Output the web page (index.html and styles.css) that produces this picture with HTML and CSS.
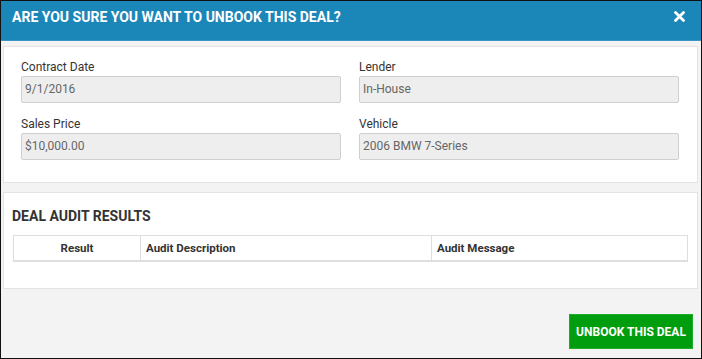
FILE: index.html
```html
<!DOCTYPE html>
<html>
<head>
<meta charset="utf-8">
<link rel="stylesheet" href="styles.css">
</head>
<body>
<div class="window">
  <div class="header">
    <div class="title">ARE YOU SURE YOU WANT TO UNBOOK THIS DEAL?</div>
    <svg class="close" width="11" height="11" viewBox="0 0 11 11"><path d="M1.5 1.5 L9.5 9.5 M9.5 1.5 L1.5 9.5" stroke="#fff" stroke-width="2.8" stroke-linecap="round"/></svg>
  </div>
  <div class="panel details">
    <div class="field">
      <div class="label">Contract Date</div>
      <div class="input">9/1/2016</div>
    </div>
    <div class="field">
      <div class="label">Lender</div>
      <div class="input">In-House</div>
    </div>
    <div class="field">
      <div class="label">Sales Price</div>
      <div class="input">$10,000.00</div>
    </div>
    <div class="field">
      <div class="label">Vehicle</div>
      <div class="input">2006 BMW 7-Series</div>
    </div>
  </div>
  <div class="panel audit">
    <div class="heading">DEAL AUDIT RESULTS</div>
    <table class="grid">
      <thead>
        <tr><th class="c-result">Result</th><th class="c-desc">Audit Description</th><th class="c-msg">Audit Message</th></tr>
      </thead>
    </table>
  </div>
  <div class="footer">
    <button class="btn">UNBOOK THIS DEAL</button>
  </div>
</div>
</body>
</html>
```
FILE: styles.css
```css
html, body {
  margin: 0;
  padding: 0;
}
body {
  font-family: Roboto, "Liberation Sans", sans-serif;
  color: #333;
}
.window {
  width: 702px;
  height: 359px;
  box-sizing: border-box;
  border: 1px solid #111;
  background: #f3f3f3;
  display: flex;
  flex-direction: column;
}
.header {
  height: 40px;
  flex-shrink: 0;
  box-sizing: border-box;
  background: #1b86b8;
  border-bottom: 1px solid #3a96c2;
  display: flex;
  align-items: flex-start;
  justify-content: space-between;
  padding: 7px 16px 0 11px;
}
.title {
  color: #fff;
  font-weight: bold;
  font-size: 14px;
  line-height: 18px;
}
.close {
  margin-top: 3px;
}
.panel {
  background: #fff;
  border: 1px solid #e3e3e3;
  margin: 0 3px 0 2px;
  flex-shrink: 0;
}
.details {
  margin-top: 5px;
  display: grid;
  grid-template-columns: 320px 320px;
  column-gap: 18px;
  row-gap: 13px;
  padding: 12px 19px 22px 17px;
}
.label {
  font-size: 12px;
  line-height: 16px;
  margin-bottom: 1px;
  color: #333;
}
.input {
  height: 27px;
  box-sizing: border-box;
  background: #eeeeee;
  border: 1px solid #cfcfcf;
  border-radius: 2px;
  font-size: 12px;
  line-height: 25px;
  padding: 0 3px;
  color: #666;
}
.audit {
  margin-top: 9px;
  padding: 14px 9px 26px 9px;
}
.heading {
  font-weight: bold;
  font-size: 14px;
  line-height: 18px;
  margin-left: -1px;
  margin-bottom: 10px;
  color: #333;
}
.grid {
  border-collapse: collapse;
  width: 675px;
}
.grid th {
  border: 1px solid #dedede;
  border-bottom: 2px solid #dedede;
  font-size: 11.5px;
  font-weight: bold;
  height: 24px;
  padding: 0 5px;
  text-align: left;
  color: #333;
}
.grid th.c-result {
  width: 116px;
  text-align: center;
}
.grid th.c-desc {
  width: 280px;
}
.footer {
  flex: 1;
  display: flex;
  justify-content: flex-end;
  align-items: flex-end;
  padding: 0 8px 9px 0;
}
.btn {
  font-family: Roboto, "Liberation Sans", sans-serif;
  background: #009e0f;
  color: #fff;
  border: 1px solid #1cad2a;
  font-weight: bold;
  font-size: 12px;
  width: 124px;
  height: 35px;
  padding: 0;
}
```
